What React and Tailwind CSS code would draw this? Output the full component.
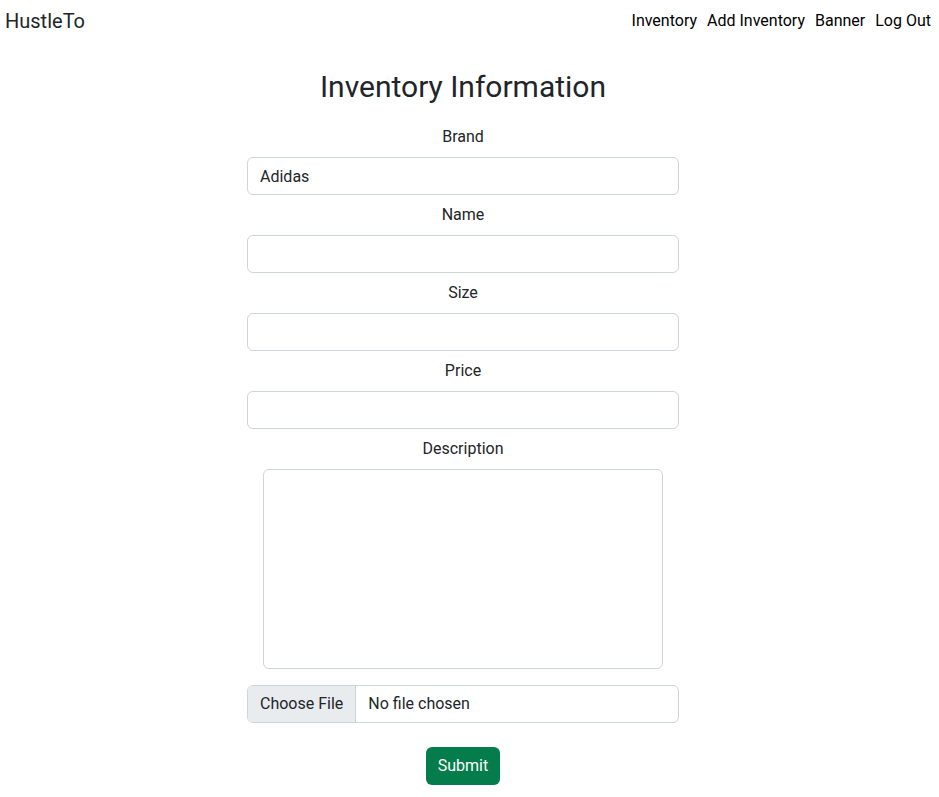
import React from 'react';

function Field({ label, value }) {
  return (
    <div className="flex flex-col items-center">
      <label className="block leading-6 mb-2">{label}</label>
      <input
        type="text"
        defaultValue={value}
        className="w-[432px] h-[38px] px-3 border border-[#ced4da] rounded-md text-[16px] text-[#212529] bg-white outline-none"
      />
    </div>
  );
}

export default function App() {
  return (
    <div className="min-h-[797px] bg-white text-[#212529] text-[16px]" style={{ fontFamily: 'Roboto, "Liberation Sans", sans-serif' }}>
      <nav className="flex items-center justify-between h-[42px] pl-[5px] pr-[8px]">
        <a className="text-[20px] text-[#212529]">HustleTo</a>
        <div className="flex gap-[10px] text-black">
          <a>Inventory</a>
          <a>Add Inventory</a>
          <a>Banner</a>
          <a>Log Out</a>
        </div>
      </nav>

      <div className="flex flex-col items-center pr-[13px]">
        <h2 className="text-[30px] leading-9 mt-[27px] mb-[20px]">Inventory Information</h2>
        <form className="flex flex-col items-center gap-2" onSubmit={(e) => e.preventDefault()}>
          <Field label="Brand" value="Adidas" />
          <Field label="Name" />
          <Field label="Size" />
          <Field label="Price" />
          <div className="flex flex-col items-center">
            <label className="block leading-6 mb-2">Description</label>
            <textarea className="w-[400px] h-[200px] border border-[#ced4da] rounded-md resize-none outline-none" />
          </div>
          <div className="flex w-[432px] h-[38px] mt-[8px] border border-[#ced4da] rounded-md overflow-hidden">
            <span className="flex items-center px-3 bg-[#e9ecef] border-r border-[#ced4da]">Choose File</span>
            <span className="flex items-center px-3">No file chosen</span>
          </div>
          <button type="submit" className="mt-4 h-[38px] px-3 rounded-md bg-[#047c4c] text-white">Submit</button>
        </form>
      </div>
    </div>
  );
}
